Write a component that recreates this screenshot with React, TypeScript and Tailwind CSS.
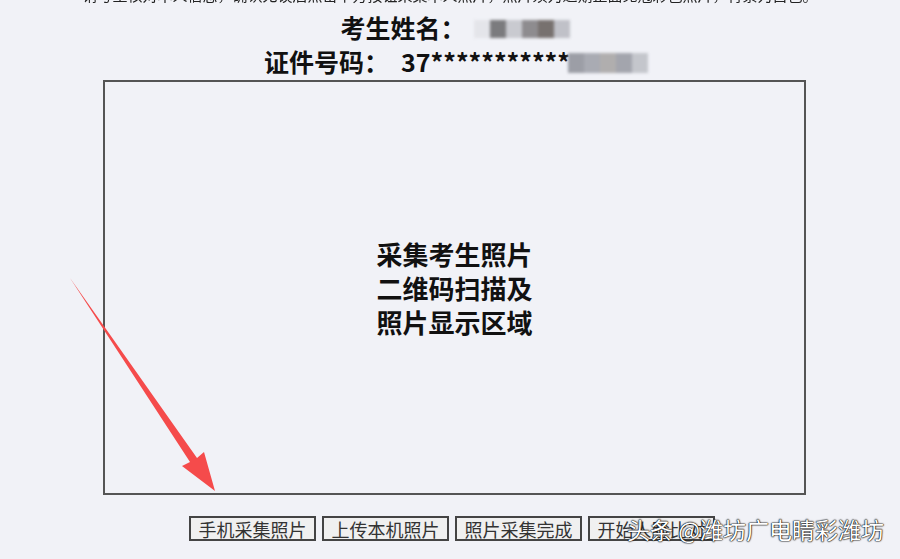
import React from 'react'

const BUTTONS = ['手机采集照片', '上传本机照片', '照片采集完成', '开始人脸比对']

const NAME_MOSAIC = ['#e4e5ea', '#7b7b7e', '#c9cad0', '#8e8c8f', '#77716f', '#c0c1c8']
const ID_MOSAIC = ['#9c9ea6', '#a9abb3', '#b0aeae', '#a3a5ad', '#c4c6cc']

function Mosaic({ colors, cell }: { colors: string[]; cell: string }) {
  return (
    <span className="inline-flex blur-[1.5px]">
      {colors.map((c, i) => (
        <span key={i} className={cell} style={{ backgroundColor: c }} />
      ))}
    </span>
  )
}

function RedArrow() {
  return (
    <svg className="absolute left-0 top-0 pointer-events-none" width="900" height="559" viewBox="0 0 900 559">
      <polygon
        points="70,278 197,458 204,452 215,491 182,466 190,462"
        fill="#f54b4b"
      />
    </svg>
  )
}

export default function App() {
  return (
    <div
      className="relative w-[900px] h-[559px] overflow-hidden bg-[#f1f2f7] text-[#111]"
      style={{ fontFamily: '"Noto Sans CJK SC", "Noto Sans", sans-serif' }}
    >
      {/* cut-off notice line */}
      <div className="h-[6px] overflow-hidden">
        <p className="-mt-[16px] text-center text-[15px] leading-[21px] text-[#222] blur-[0.6px] whitespace-nowrap">
          请考生核对本人信息，确认无误后点击下方按钮采集本人照片，照片须为近期正面免冠彩色照片，背景为白色。
        </p>
      </div>

      {/* name + id */}
      <div className="flex flex-col items-center mt-[6px] font-bold text-[25px] leading-[31px]">
        <div className="flex items-center h-[31px] pl-[10px]">
          <span>考生姓名：</span>
          <span className="ml-[8px]">
            <Mosaic colors={NAME_MOSAIC} cell="w-[16px] h-[18px]" />
          </span>
        </div>
        <div className="flex items-center h-[34px] mt-[1px] pl-[12px]">
          <span>证件号码：</span>
          <span className="ml-[12px]">37</span>
          <span>***********</span>
          <span className="mt-[2px] -ml-[2px]">
            <Mosaic colors={ID_MOSAIC} cell="w-[16px] h-[20px]" />
          </span>
        </div>
      </div>

      {/* photo area */}
      <div className="ml-[103px] mt-[2px] w-[703px] h-[415px] border-2 border-[#555] flex items-center justify-center">
        <div className="text-center font-bold text-[26px] leading-[34px]">
          <div>采集考生照片</div>
          <div>二维码扫描及</div>
          <div>照片显示区域</div>
        </div>
      </div>

      {/* buttons */}
      <div className="flex gap-[6px] ml-[189px] mt-[21px]">
        {BUTTONS.map((label) => (
          <button
            key={label}
            className="w-[127px] h-[25px] border-2 border-[#444] bg-[#f0f0f0] text-[#333] text-[18px] leading-[20px] flex items-center justify-center"
          >
            {label}
          </button>
        ))}
      </div>

      <RedArrow />

      {/* watermark */}
      <div className="absolute left-[627px] top-[514px] text-white text-[23px] leading-[30px] whitespace-nowrap [text-shadow:0_0_2px_#000,0_0_1px_#000,0_0_1px_#000]">
        头条 @潍坊广电睛彩潍坊
      </div>
    </div>
  )
}
